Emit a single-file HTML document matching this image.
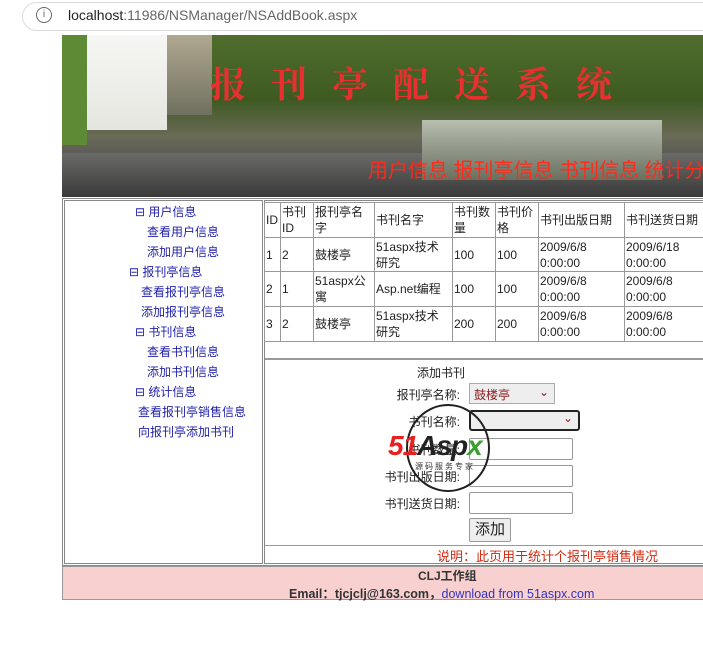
<!DOCTYPE html>
<html><head><meta charset="utf-8">
<style>
*{margin:0;padding:0;box-sizing:border-box}
body{width:703px;height:647px;overflow:hidden;background:#fff;font-family:"Liberation Sans","Noto Sans CJK SC",sans-serif;font-size:12px;color:#222;position:relative}
.a{position:absolute;white-space:nowrap}
.nav{color:#2222aa}
table{border-collapse:collapse;table-layout:fixed}
td{border:1px solid #999;vertical-align:middle;font-size:12px;line-height:16px;padding:0 1px;white-space:nowrap;overflow:hidden}
.lbl{position:absolute;text-align:right;width:140px;left:320px}
.inp{position:absolute;left:469px;width:104px;height:22px;border:1px solid #999;border-radius:2px;background:#fff}
</style></head><body>
<div class="a" style="left:22px;top:2px;width:700px;height:29px;border:1px solid #ddd;border-radius:15px;background:#fff"></div>
<div class="a" style="left:36px;top:7px;width:16px;height:16px;border:1.5px solid #666;border-radius:50%;font-size:10px;text-align:center;line-height:13px;color:#666">i</div>
<div class="a" style="left:68px;top:7px;font-size:14px;color:#222">localhost<span style="color:#666">:11986/NSManager/NSAddBook.aspx</span></div>
<!-- banner -->
<div class="a" style="left:62px;top:35px;width:641px;height:162px;overflow:hidden;background:linear-gradient(180deg,#4f6e2c 0%,#3e5a22 40%,#6a6a55 62%,#5a5a58 75%,#3e3e3e 100%)">
 <div class="a" style="left:0;top:0;width:25px;height:110px;background:#5f8a35"></div>
 <div class="a" style="left:25px;top:0;width:80px;height:95px;background:linear-gradient(180deg,#f6f6f4,#e6e6e0)"></div>
 <div class="a" style="left:105px;top:0;width:45px;height:80px;background:linear-gradient(180deg,#b0a890,#707060)"></div>
 <div class="a" style="left:0;top:118px;width:641px;height:44px;background:linear-gradient(180deg,#6a6a68,#3a3a3a)"></div>
 <div class="a" style="left:360px;top:85px;width:240px;height:60px;background:linear-gradient(180deg,#b8beb0,#6a7060)"></div>
 <div class="a" style="left:148px;top:22px;font-size:36px;font-weight:bold;color:#e83030;letter-spacing:25px;font-family:'Noto Serif CJK SC',serif">报刊亭配送系统</div>
 <div class="a" style="left:306px;top:119px;font-size:20px;color:#ff2a1a">用户信息 报刊亭信息 书刊信息 统计分</div>
</div>
<!-- main borders -->
<div class="a" style="left:62px;top:198px;width:641px;height:368px;border:1px solid #888;border-right:none"></div>
<div class="a" style="left:64px;top:200px;width:199px;height:364px;border:1px solid #888"></div>
<div class="a" style="left:264px;top:200px;width:439px;height:364px;border:1px solid #888;border-right:none"></div>
<!-- nav -->
<div class="a nav" style="left:135px;top:203px">⊟ 用户信息</div>
<div class="a nav" style="left:147px;top:223px">查看用户信息</div>
<div class="a nav" style="left:147px;top:243px">添加用户信息</div>
<div class="a nav" style="left:129px;top:263px">⊟ 报刊亭信息</div>
<div class="a nav" style="left:141px;top:283px">查看报刊亭信息</div>
<div class="a nav" style="left:141px;top:303px">添加报刊亭信息</div>
<div class="a nav" style="left:135px;top:323px">⊟ 书刊信息</div>
<div class="a nav" style="left:147px;top:343px">查看书刊信息</div>
<div class="a nav" style="left:147px;top:363px">添加书刊信息</div>
<div class="a nav" style="left:135px;top:383px">⊟ 统计信息</div>
<div class="a nav" style="left:138px;top:403px">查看报刊亭销售信息</div>
<div class="a nav" style="left:138px;top:423px">向报刊亭添加书刊</div>
<!-- data table -->
<table class="a" style="left:264px;top:202px;width:445px">
<colgroup><col style="width:16px"><col style="width:33px"><col style="width:61px"><col style="width:78px"><col style="width:43px"><col style="width:43px"><col style="width:86px"><col style="width:85px"></colgroup>
<tr style="height:35px"><td>ID</td><td>书刊<br>ID</td><td>报刊亭名<br>字</td><td>书刊名字</td><td>书刊数<br>量</td><td>书刊价<br>格</td><td>书刊出版日期</td><td>书刊送货日期</td></tr>
<tr style="height:34px"><td>1</td><td>2</td><td>鼓楼亭</td><td>51aspx技术<br>研究</td><td>100</td><td>100</td><td>2009/6/8<br>0:00:00</td><td>2009/6/18<br>0:00:00</td></tr>
<tr style="height:35px"><td>2</td><td>1</td><td>51aspx公<br>寓</td><td>Asp.net编程</td><td>100</td><td>100</td><td>2009/6/8<br>0:00:00</td><td>2009/6/8<br>0:00:00</td></tr>
<tr style="height:35px"><td>3</td><td>2</td><td>鼓楼亭</td><td>51aspx技术<br>研究</td><td>200</td><td>200</td><td>2009/6/8<br>0:00:00</td><td>2009/6/8<br>0:00:00</td></tr>
</table>
<div class="a" style="left:265px;top:358px;width:438px;height:3px;border-top:2px solid #999"></div>
<div class="a" style="left:265px;top:545px;width:438px;border-top:1px solid #999"></div>
<!-- form -->
<div class="a" style="left:417px;top:364px">添加书刊</div>
<div class="lbl" style="top:386px">报刊亭名称:</div>
<div class="a" style="left:469px;top:383px;width:86px;height:21px;border:1px solid #aaa;background:#eee;color:#8b1a1a;padding:2px 4px">鼓楼亭<span style="position:absolute;right:5px;top:1px;color:#8b1a1a">⌄</span></div>
<div class="lbl" style="top:413px">书刊名称:</div>
<div class="a" style="left:469px;top:410px;width:111px;height:21px;border:2px solid #222;border-radius:3px;background:#eee"><span style="position:absolute;right:5px;top:-1px;color:#8b1a1a">⌄</span></div>
<div class="lbl" style="top:441px">书刊数量:</div>
<div class="inp" style="top:438px"></div>
<div class="lbl" style="top:468px">书刊出版日期:</div>
<div class="inp" style="top:465px"></div>
<div class="lbl" style="top:495px">书刊送货日期:</div>
<div class="inp" style="top:492px"></div>
<div class="a" style="left:469px;top:518px;width:42px;height:24px;border:1px solid #999;border-radius:2px;background:#eee;font-size:15px;text-align:center;line-height:22px">添加</div>
<!-- watermark -->
<div class="a" style="left:406px;top:404px;width:84px;height:88px;border:2px solid #222;border-radius:50%"></div>
<div class="a" style="left:388px;top:430px;font-size:28px;font-weight:bold;font-style:italic;letter-spacing:-1px"><span style="color:#e82020">51</span><span style="color:#222">Asp</span><span style="color:#3aa030">x</span></div>
<div class="a" style="left:415px;top:461px;font-size:8px;color:#333;letter-spacing:2px">源码服务专家</div>
<div class="a" style="left:437px;top:546px;color:#d02a10;font-size:13px">说明：此页用于统计个报刊亭销售情况</div>
<!-- footer -->
<div class="a" style="left:62px;top:566px;width:641px;height:34px;background:#f8d0d0;border:1px solid #999;border-right:none"></div>
<div class="a" style="left:418px;top:567px;font-weight:bold;color:#333">CLJ工作组</div>
<div class="a" style="left:289px;top:583px;font-weight:bold;color:#333;font-size:12.5px">Email：tjcjclj@163.com，<span style="font-weight:normal;color:#3333bb">download from 51aspx.com</span></div>
</body></html>
